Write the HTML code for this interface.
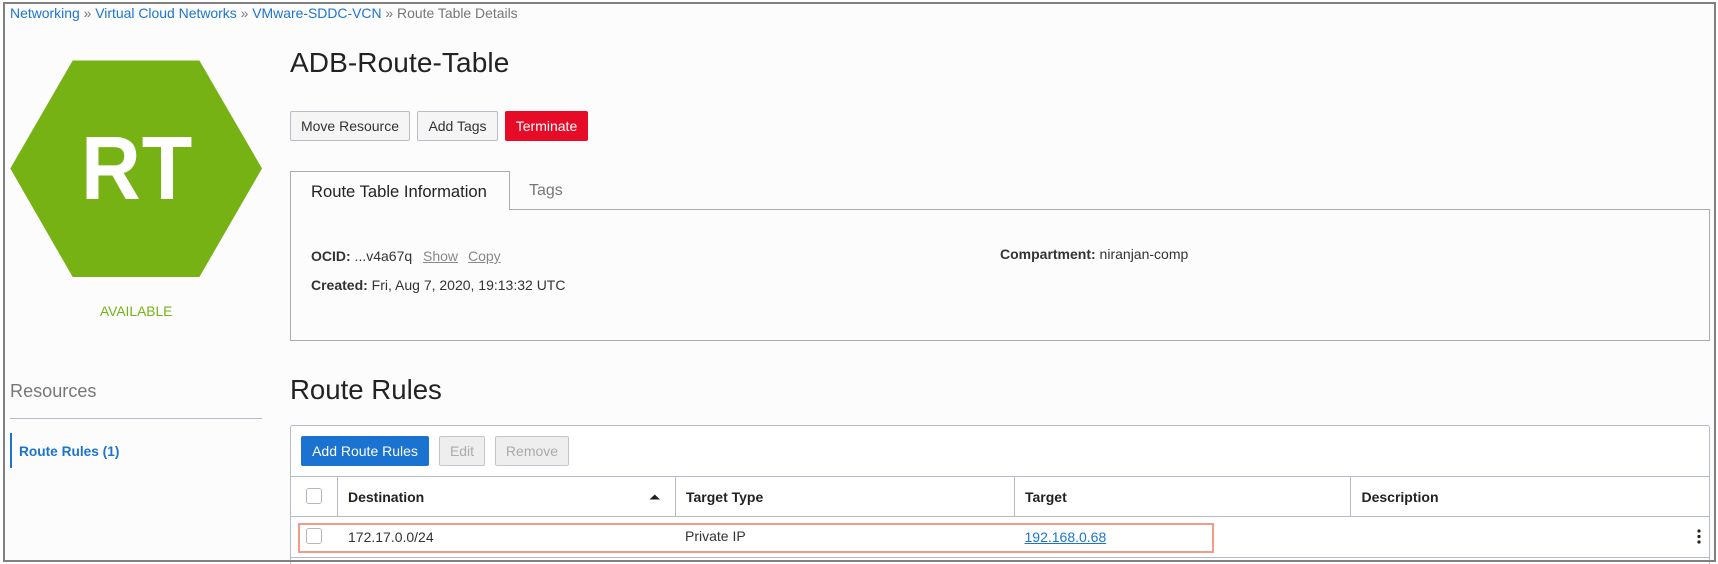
<!DOCTYPE html>
<html><head><meta charset="utf-8"><style>
html,body{margin:0;padding:0;width:1718px;height:564px;overflow:hidden;background:#fff}
body{position:relative;font-family:"Liberation Sans",sans-serif;font-size:14px;color:#333}
.a{position:absolute;white-space:nowrap;line-height:20px}
.box{position:absolute;box-sizing:border-box}
.btn{position:absolute;box-sizing:border-box;height:30px;top:111px;border:1px solid #b8bcc4;border-radius:2px;background:#f5f5f6;text-align:center;line-height:28px;font-size:14px;color:#333}
.link{color:#1b75d0}
.b{font-weight:bold}
.g{color:#888}
.cb{position:absolute;box-sizing:border-box;width:16px;height:16px;left:306px;border:1px solid #b2b6be;border-radius:3px;background:#fff}
.th{font-weight:bold;color:#222}
.h{position:absolute;height:1px;background:#b6bcc5}
.v{position:absolute;width:1px;background:#b6bcc5}
</style></head><body>
<div class="box" style="left:0;top:0;width:1718px;height:564px;background:#fff"></div>
<div class="box" style="left:4px;top:3px;width:1710px;height:557px;background:#fcfcfc"></div>

<div class="a" style="left:10px;top:3px;color:#777;font-size:13.95px"><span class="link">Networking</span> » <span class="link">Virtual Cloud Networks</span> » <span class="link">VMware-SDDC-VCN</span> » Route Table Details</div>

<svg class="box" style="left:0;top:0" width="270" height="290"><polygon points="72.7,60.5 199.4,60.5 262,168.5 199.4,277 72.7,277 10.3,168.5" fill="#76b214"/></svg>
<div class="a" style="left:81px;top:124px;line-height:90px;font-size:90px;font-weight:bold;color:#fff;letter-spacing:1px;transform:scaleX(.92);transform-origin:left top">RT</div>
<div class="a" style="left:100px;top:301.5px;color:#76b214;font-size:13.8px">AVAILABLE</div>

<div class="a" style="left:290px;top:47px;line-height:32px;font-size:28px;letter-spacing:.1px;color:#222">ADB-Route-Table</div>

<div class="btn" style="left:290px;width:120px">Move Resource</div>
<div class="btn" style="left:417px;width:81px">Add Tags</div>
<div class="btn" style="left:505px;width:83px;background:#e60b26;border-color:#e60b26;color:#fff">Terminate</div>

<div class="box" style="left:290px;top:209px;width:1420px;height:132px;border:1px solid #aaa"></div>
<div class="box" style="left:290px;top:171px;width:219.5px;height:39px;border:1px solid #aaa;border-bottom:0;background:#fcfcfc"></div>
<div class="a" style="left:311px;top:181.5px;font-size:16.6px;color:#222">Route Table Information</div>
<div class="a" style="left:529px;top:181px;font-size:16px;color:#777">Tags</div>

<div class="a" style="left:311px;top:246px"><span class="b">OCID:</span> ...v4a67q</div>
<div class="a g" style="left:423px;top:246px;text-decoration:underline">Show</div>
<div class="a g" style="left:468px;top:246px;text-decoration:underline">Copy</div>
<div class="a" style="left:311px;top:275px"><span class="b">Created:</span> Fri, Aug 7, 2020, 19:13:32 UTC</div>
<div class="a" style="left:1000px;top:244px"><span class="b">Compartment:</span> niranjan-comp</div>

<div class="a" style="left:10px;top:381px;font-size:18.1px;color:#777">Resources</div>
<div class="h" style="left:10px;top:418px;width:252px"></div>
<div class="box" style="left:10px;top:433px;width:2px;height:35px;background:#1b75d0"></div>
<div class="a b link" style="left:19px;top:441.5px;font-size:13.7px">Route Rules (1)</div>

<div class="a" style="left:290px;top:374px;line-height:32px;font-size:27.6px;color:#222">Route Rules</div>

<div class="box" style="left:290px;top:425px;width:1420px;height:145px;border:1px solid #b6bcc5;border-radius:3px;background:#fff"></div>
<div class="btn" style="left:301px;top:436px;width:128px;background:#1a73d0;border-color:#1a73d0;color:#fff">Add Route Rules</div>
<div class="btn" style="left:439px;top:436px;width:46px;background:#eee;border-color:#c4c6ca;color:#aaa">Edit</div>
<div class="btn" style="left:495px;top:436px;width:74px;background:#eee;border-color:#c4c6ca;color:#aaa">Remove</div>

<div class="h" style="left:290px;top:476px;width:1420px"></div>
<div class="h" style="left:290px;top:516px;width:1420px"></div>
<div class="h" style="left:290px;top:557px;width:1420px"></div>
<div class="v" style="left:337px;top:476px;height:40px"></div>
<div class="v" style="left:675px;top:476px;height:40px"></div>
<div class="v" style="left:1014px;top:476px;height:40px"></div>
<div class="v" style="left:1350px;top:476px;height:40px"></div>

<div class="cb" style="top:488px"></div>
<div class="a th" style="left:348px;top:487px">Destination</div>
<svg class="box" style="left:649px;top:494px" width="12" height="6"><polygon points="0.5,5.5 11,5.5 5.75,0.5" fill="#222"/></svg>
<div class="a th" style="left:686px;top:487px">Target Type</div>
<div class="a th" style="left:1025px;top:487px">Target</div>
<div class="a th" style="left:1361.5px;top:487px">Description</div>

<div class="cb" style="top:528px"></div>
<div class="a" style="left:348px;top:526.5px">172.17.0.0/24</div>
<div class="a" style="left:685px;top:526px">Private IP</div>
<div class="a link" style="left:1024.5px;top:527px;text-decoration:underline">192.168.0.68</div>
<svg class="box" style="left:1694px;top:528px" width="10" height="18"><circle cx="5" cy="3" r="1.6" fill="#222"/><circle cx="5" cy="8.5" r="1.6" fill="#222"/><circle cx="5" cy="14" r="1.6" fill="#222"/></svg>

<div class="box" style="left:298px;top:523px;width:916px;height:30px;border:2px solid #f49b87"></div>

<div class="box" style="left:3px;top:2px;width:1713px;height:560px;border:2px solid #808080"></div>
</body></html>
